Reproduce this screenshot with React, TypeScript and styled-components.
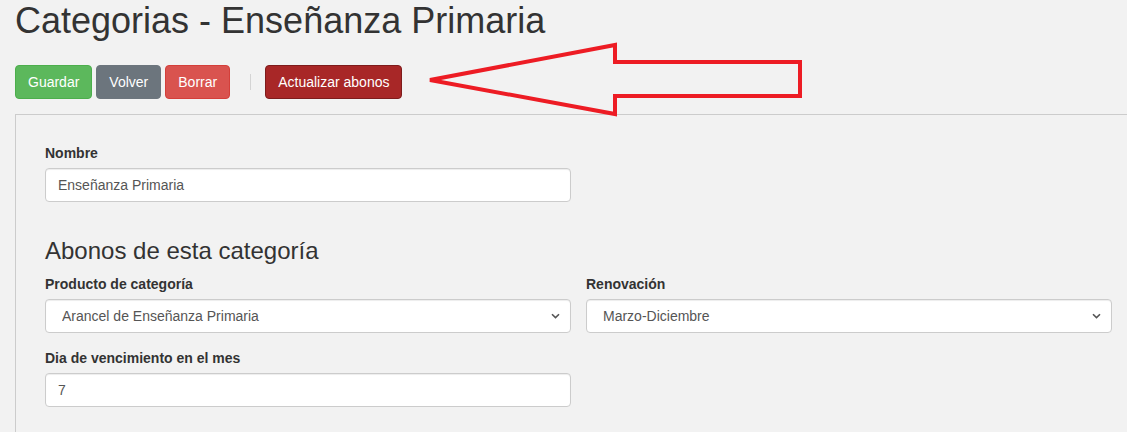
import React from "react";
import styled, { createGlobalStyle } from "styled-components";

const GlobalStyle = createGlobalStyle`
  html, body {
    margin: 0;
    padding: 0;
    background: #f2f2f2;
    overflow: hidden;
  }
  body {
    font-family: "Liberation Sans", Arial, Helvetica, sans-serif;
    font-size: 14px;
    line-height: 20px;
    color: #333;
  }
  * {
    box-sizing: border-box;
  }
`;

const Page = styled.div`
  position: relative;
  display: flex;
  flex-direction: column;
  padding: 1px 0 0 15px;
  height: 432px;
  overflow: hidden;
`;

const Title = styled.h1`
  margin: 0;
  font-size: 36px;
  line-height: 40px;
  font-weight: 400;
  color: #333;
`;

const Toolbar = styled.div`
  display: flex;
  align-items: center;
  gap: 4px;
  margin-top: 24px;
`;

const variants = {
  success: { bg: "#5cb85c", border: "#4cae4c" },
  secondary: { bg: "#6c757d", border: "#6c757d" },
  danger: { bg: "#d9534f", border: "#d43f3a" },
  dark: { bg: "#a82727", border: "#7e1c1c" },
};

const Button = styled.button<{ $variant: keyof typeof variants }>`
  height: 34px;
  padding: 6px 12px;
  font-family: inherit;
  font-size: 14px;
  line-height: 20px;
  color: #fff;
  background: ${(p) => variants[p.$variant].bg};
  border: 1px solid ${(p) => variants[p.$variant].border};
  border-radius: 4px;
  cursor: pointer;
`;

const Separator = styled.span`
  width: 1px;
  height: 16px;
  background: #d4d4d4;
  margin: 0 10px 0 16px;
`;

const Panel = styled.div`
  flex: 1;
  margin-top: 15px;
  border-top: 1px solid #cccccc;
  border-left: 1px solid #cccccc;
  padding: 28px 0 0 29px;
`;

const FormGroup = styled.div`
  margin-bottom: 15px;
`;

const Label = styled.label`
  display: block;
  margin-bottom: 5px;
  font-weight: 700;
  color: #333;
`;

const TextInput = styled.input`
  display: block;
  width: 526px;
  height: 34px;
  padding: 6px 12px;
  font-family: inherit;
  font-size: 14px;
  line-height: 20px;
  color: #555;
  background: #fff;
  border: 1px solid #ccc;
  border-radius: 4px;
  box-shadow: inset 0 1px 1px rgba(0, 0, 0, 0.075);
  outline: none;
`;

const SelectWrap = styled.div`
  position: relative;
  width: 526px;
`;

const Select = styled.select`
  display: block;
  width: 100%;
  height: 34px;
  padding: 6px 30px 6px 16px;
  font-family: inherit;
  font-size: 14px;
  line-height: 20px;
  color: #555;
  background: #fff;
  border: 1px solid #ccc;
  border-radius: 4px;
  box-shadow: inset 0 1px 1px rgba(0, 0, 0, 0.075);
  appearance: none;
  outline: none;
`;

const Chevron = styled.svg`
  position: absolute;
  right: 11px;
  top: 14px;
  pointer-events: none;
`;

const Subtitle = styled.h3`
  margin: 36px 0 10px;
  font-size: 24px;
  line-height: 26px;
  font-weight: 400;
  color: #333;
`;

const Row = styled.div`
  display: grid;
  grid-template-columns: 526px 526px;
  column-gap: 15px;
`;

const Annotation = styled.svg`
  position: absolute;
  left: 0;
  top: 0;
  pointer-events: none;
`;

const SelectField = ({ value }: { value: string }) => (
  <SelectWrap>
    <Select defaultValue={value}>
      <option>{value}</option>
    </Select>
    <Chevron width="9" height="6" viewBox="0 0 9 6">
      <path d="M1 1.2 L4.5 4.6 L8 1.2" fill="none" stroke="#555" strokeWidth="1.6" />
    </Chevron>
  </SelectWrap>
);

const App = () => {
  return (
    <Page>
      <GlobalStyle />
      <Title>Categorias - Enseñanza Primaria</Title>
      <Toolbar>
        <Button $variant="success">Guardar</Button>
        <Button $variant="secondary">Volver</Button>
        <Button $variant="danger">Borrar</Button>
        <Separator />
        <Button $variant="dark">Actualizar abonos</Button>
      </Toolbar>
      <Panel>
        <FormGroup>
          <Label>Nombre</Label>
          <TextInput defaultValue="Enseñanza Primaria" />
        </FormGroup>
        <Subtitle>Abonos de esta categoría</Subtitle>
        <Row>
          <FormGroup>
            <Label>Producto de categoría</Label>
            <SelectField value="Arancel de Enseñanza Primaria" />
          </FormGroup>
          <FormGroup>
            <Label>Renovación</Label>
            <SelectField value="Marzo-Diciembre" />
          </FormGroup>
        </Row>
        <FormGroup>
          <Label>Dia de vencimiento en el mes</Label>
          <TextInput defaultValue="7" />
        </FormGroup>
      </Panel>
      <Annotation width="1127" height="432" viewBox="0 0 1127 432">
        <polygon
          points="430,80 615,45 615,62 800,62 800,96 615,96 615,114"
          fill="none"
          stroke="#ed1c24"
          strokeWidth="4"
          strokeLinejoin="miter"
        />
      </Annotation>
    </Page>
  );
};

export default App;
